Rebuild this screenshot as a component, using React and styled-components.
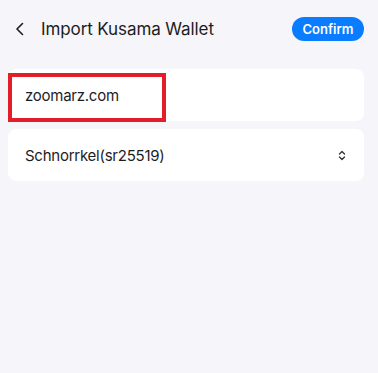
import styled, { createGlobalStyle } from 'styled-components';

const GlobalStyle = createGlobalStyle`
  html, body {
    margin: 0;
    padding: 0;
    background: #f5f5fa;
  }
  body {
    font-family: Inter, "Noto Sans", sans-serif;
    color: #1d1d1f;
  }
`

const Page = styled.div`
  width: 378px;
  min-height: 373px;
  box-sizing: border-box;
  padding: 17px 14px 0 8px;
  display: flex;
  flex-direction: column;
`

const Header = styled.header`
  display: flex;
  align-items: center;
  height: 24px;
  margin-bottom: 28px;
`

const BackButton = styled.button`
  width: 33px;
  height: 24px;
  padding: 0 0 0 7px;
  border: 0;
  background: transparent;
  display: flex;
  align-items: center;
  cursor: pointer;
  color: #1d1d1f;
`

const Title = styled.h1`
  flex: 1;
  margin: 0;
  font-size: 17px;
  font-weight: 400;
  line-height: 24px;
  letter-spacing: -0.1px;
`

const ConfirmButton = styled.button`
  width: 72px;
  height: 24px;
  border: 0;
  border-radius: 12px;
  background: #0a7cff;
  color: #fff;
  font-family: inherit;
  font-size: 13px;
  font-weight: 600;
  cursor: pointer;
`

const Card = styled.div`
  position: relative;
  height: 52px;
  margin-bottom: 8px;
  background: #fff;
  border-radius: 8px;
  display: flex;
  align-items: center;
  justify-content: space-between;
  padding: 0 18px 0 17px;
  font-size: 15px;
  letter-spacing: -0.25px;
`

const Highlight = styled.div`
  position: absolute;
  left: 0;
  top: 4px;
  width: 158px;
  height: 49px;
  box-sizing: border-box;
  border: 4px solid #e31e2b;
`

const Chevron = () => (
  <svg width="9" height="14" viewBox="0 0 9 14" fill="none">
    <path d="M7.5 1.5L2 7l5.5 5.5" stroke="currentColor" strokeWidth="1.6" strokeLinecap="round" strokeLinejoin="round" />
  </svg>
)

const UpDown = () => (
  <svg width="8" height="11" viewBox="0 0 8 11" fill="none">
    <path d="M1.5 4L4 1.5 6.5 4M1.5 7L4 9.5 6.5 7" stroke="#333" strokeWidth="1.3" strokeLinecap="round" strokeLinejoin="round" />
  </svg>
)

export default function App() {
  return (
    <>
      <GlobalStyle />
      <Page>
        <Header>
          <BackButton><Chevron /></BackButton>
          <Title>Import Kusama Wallet</Title>
          <ConfirmButton>Confirm</ConfirmButton>
        </Header>
        <Card>
          <span>zoomarz.com</span>
          <Highlight />
        </Card>
        <Card>
          <span>Schnorrkel(sr25519)</span>
          <UpDown />
        </Card>
      </Page>
    </>
  )
}
